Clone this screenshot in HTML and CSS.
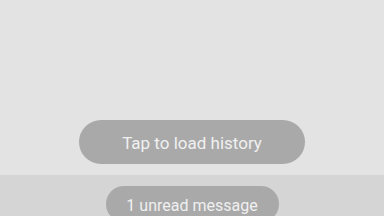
FILE: index.html
```html
<!DOCTYPE html>
<html>
<head>
<meta charset="utf-8">
<link rel="stylesheet" href="styles.css">
</head>
<body>
<div class="screen">
  <div class="history">
    <div class="pill pill-history">Tap to load history</div>
  </div>
  <div class="unread">
    <div class="pill pill-unread">1 unread message</div>
  </div>
</div>
</body>
</html>
```
FILE: styles.css
```css
html, body {
  margin: 0;
  padding: 0;
  width: 384px;
  height: 216px;
  overflow: hidden;
  background: #e3e3e3;
  font-family: Roboto, "Noto Sans", sans-serif;
}
.screen {
  display: flex;
  flex-direction: column;
  width: 384px;
  height: 216px;
}
.history {
  height: 175px;
  display: flex;
  justify-content: center;
  align-items: flex-end;
  padding-bottom: 11px;
  box-sizing: border-box;
  background: #e3e3e3;
}
.unread {
  flex: 1;
  display: flex;
  justify-content: center;
  align-items: flex-start;
  padding-top: 11px;
  background: #d5d5d5;
  overflow: hidden;
}
.pill {
  background: #a9a9a9;
  color: #f0f0f0;
  display: flex;
  align-items: center;
  justify-content: center;
  border-radius: 999px;
  box-sizing: border-box;
}
.pill-history {
  width: 226px;
  height: 44px;
  font-size: 17px;
  padding-top: 2px;
}
.pill-unread {
  width: 173px;
  height: 36px;
  font-size: 16px;
  padding-top: 2px;
  flex-shrink: 0;
}
```
